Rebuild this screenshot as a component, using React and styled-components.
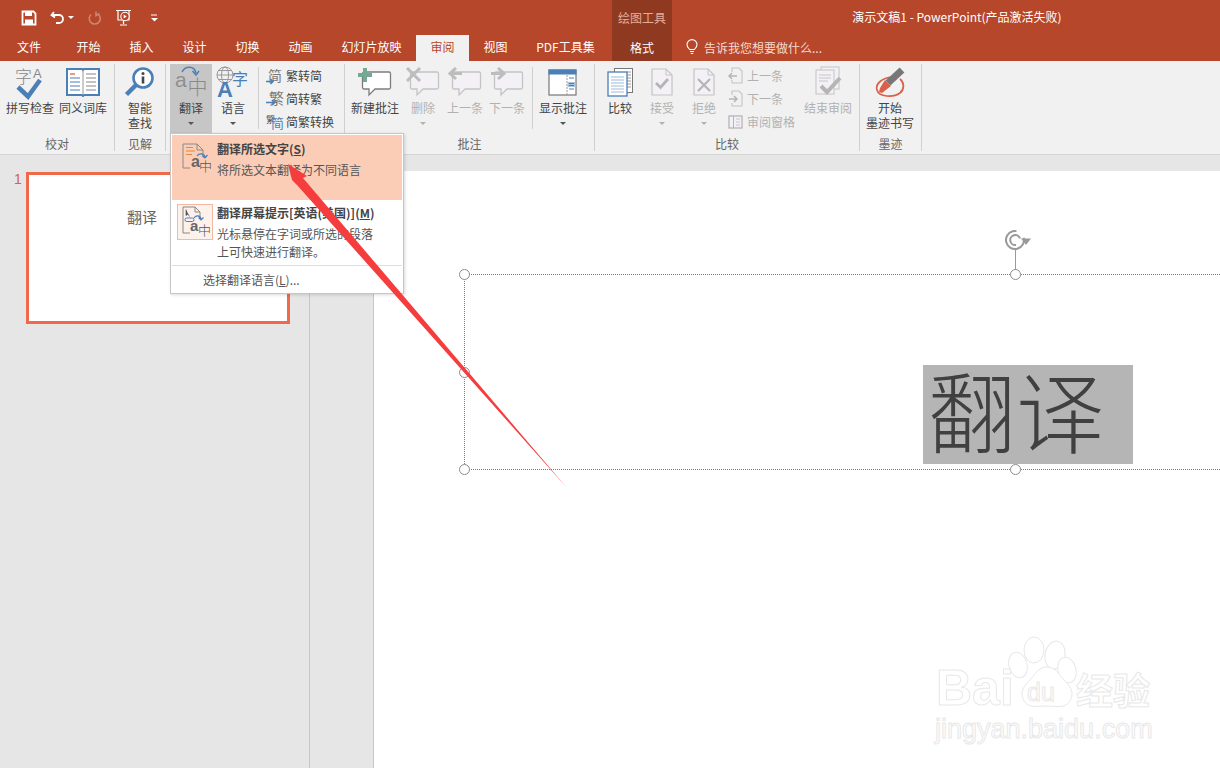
import React from 'react';
import styled, { createGlobalStyle } from 'styled-components';

const GlobalStyle = createGlobalStyle`
  html, body { margin: 0; padding: 0; height: 100%; background: #e6e6e6; }
  body {
    font-family: "Noto Sans CJK SC", "Liberation Sans", sans-serif;
    font-size: 12px;
    color: #444;
    overflow: hidden;
  }
  #root { height: 100%; }
`;

const Page = styled.div`
  position: relative;
  width: 1220px;
  height: 768px;
  overflow: hidden;
  display: flex;
  flex-direction: column;
`;

// Title bar + tabs
const Header = styled.header`
  background: #b7472a;
  color: #fff;
  flex: none;
`;

const TitleRow = styled.div`
  display: flex;
  height: 35px;
`;

const Qat = styled.div`
  width: 612px;
  display: flex;
  align-items: center;
  padding-left: 21px;
  box-sizing: border-box;
`;

const QatSlot = styled.span`
  display: flex;
  align-items: center;
  margin-right: ${p => p.$gap || 0}px;
`;

const QatCaret = styled.i`
  display: block;
  margin-left: 3px;
  width: 0;
  height: 0;
  border-left: 3px solid transparent;
  border-right: 3px solid transparent;
  border-top: 3px solid #fff;
`;

const ContextCell = styled.div`
  width: 60px;
  box-sizing: border-box;
  background: #8f3a20;
  display: flex;
  align-items: center;
  justify-content: center;
  padding-bottom: ${p => p.$pb || 0}px;
  color: ${p => p.$dim ? '#e6ad98' : '#fff'};
`;

const DocTitle = styled.div`
  flex: 1;
  text-align: center;
  padding-left: 22px;
  line-height: 33px;
`;

const TabRow = styled.div`
  display: flex;
  height: 26px;
`;

const Tab = styled.div`
  width: ${p => p.$w}px;
  box-sizing: border-box;
  padding-right: ${p => p.$shift || 0}px;
  text-align: center;
  line-height: 24px;
  background: ${p => p.$active ? '#f1f1f1' : 'transparent'};
  color: ${p => p.$active ? '#b7472a' : '#fff'};
`;

const TellMe = styled.div`
  display: flex;
  align-items: center;
  gap: 6px;
  padding: 0 0 2px 14px;
  color: #f3dcd3;
`;

// Ribbon
const Ribbon = styled.div`
  flex: none;
  display: flex;
  height: 94px;
  box-sizing: border-box;
  padding-top: 3px;
  background: #f1f1f1;
  border-bottom: 1px solid #d4d4d4;
`;

const Group = styled.section`
  width: ${p => p.$w}px;
  height: 87px;
  box-sizing: border-box;
  border-right: 1px solid #d0d0d0;
  display: flex;
  flex-direction: column;
`;

const GroupItems = styled.div`
  flex: none;
  height: 72px;
  display: flex;
  padding-left: ${p => p.$pad || 0}px;
`;

const GroupLabel = styled.div`
  text-align: center;
  line-height: 16px;
  color: #666;
`;

const BigButton = styled.div`
  width: ${p => p.$w}px;
  height: 70px;
  flex: none;
  display: flex;
  flex-direction: column;
  align-items: center;
  background: ${p => p.$on ? '#c6c6c6' : 'transparent'};
  color: ${p => p.$off ? '#b1b1b1' : '#444'};
`;

const BigIcon = styled.div`
  height: 36px;
  flex: none;
  display: flex;
  align-items: center;
  justify-content: center;
`;

const BigLabel = styled.div`
  line-height: 15px;
  text-align: center;
  white-space: nowrap;
`;

const Caret = styled.i`
  display: block;
  margin-top: 7px;
  width: 0;
  height: 0;
  border-left: 3px solid transparent;
  border-right: 3px solid transparent;
  border-top: 3px solid ${p => p.$off ? '#b1b1b1' : '#555'};
`;

const InnerSep = styled.div`
  width: 1px;
  height: 62px;
  margin: 3px ${p => p.$after}px 0 ${p => p.$before}px;
  background: #d0d0d0;
  flex: none;
`;

const SmallList = styled.div`
  flex: none;
  width: ${p => p.$w}px;
  padding-left: 4px;
  box-sizing: border-box;
  display: flex;
  flex-direction: column;
`;

const SmallRow = styled.div`
  height: 23px;
  display: flex;
  align-items: center;
  gap: ${p => p.$off ? 4 : 2}px;
  white-space: nowrap;
  color: ${p => p.$off ? '#b1b1b1' : '#444'};
`;

// Workspace
const Workspace = styled.main`
  flex: 1;
  display: flex;
  min-height: 0;
`;

const Sidebar = styled.aside`
  width: 310px;
  flex: none;
  box-sizing: border-box;
  background: #e6e6e6;
  border-right: 1px solid #c6c6c6;
  display: flex;
  align-items: flex-start;
  padding: 17px 0 0 14px;
`;

const SlideNo = styled.div`
  width: 12px;
  font-family: "Liberation Sans", sans-serif;
  font-size: 14px;
  line-height: 14px;
  color: #d9634a;
`;

const Thumb = styled.div`
  width: 264px;
  height: 152px;
  box-sizing: border-box;
  background: #fff;
  border: 3px solid #ee6a4b;
  display: flex;
  justify-content: center;
  padding: 31px 32px 0 0;
  font-size: 15px;
  line-height: 22px;
  color: #666;
`;

const Stage = styled.div`
  flex: 1;
  display: flex;
  padding: 16px 0 0 63px;
  background: #e6e6e6;
`;

const GutterLine = styled.div`
  width: 1px;
  background: #c6c6c6;
  flex: none;
`;

const Slide = styled.div`
  flex: 1;
  background: #fff;
  position: relative;
`;

const Frame = styled.div`
  position: absolute;
  left: 90px;
  top: 103px;
  right: -4px;
  height: 194px;
  border: 1px dotted #7a7a7a;
  border-right: none;
`;

const Handle = styled.i`
  position: absolute;
  left: ${p => p.$x}px;
  top: ${p => p.$y}px;
  width: 11px;
  height: 11px;
  border-radius: 50%;
  box-sizing: border-box;
  background: #fff;
  border: 1.5px solid #8c8c8c;
`;

const StemLine = styled.i`
  position: absolute;
  left: 641px;
  top: 79px;
  width: 1px;
  height: 20px;
  background: #999;
`;

const Rotate = styled.div`
  position: absolute;
  left: 631px;
  top: 58px;
  width: 27px;
  height: 22px;
`;

const BigText = styled.div`
  position: absolute;
  left: 549px;
  top: 194px;
  width: 210px;
  height: 99px;
  background: #b5b5b5;
  color: #404040;
  font-size: 88px;
  font-weight: 300;
  line-height: 86px;
  padding-left: 5px;
  box-sizing: border-box;
  white-space: nowrap;
  overflow: hidden;
`;

const Menu = styled.div`
  position: absolute;
  left: 170px;
  top: 133px;
  width: 234px;
  height: 161px;
  box-sizing: border-box;
  background: #fff;
  border: 1px solid #c6c6c6;
  box-shadow: 1px 1px 3px rgba(0, 0, 0, 0.15);
  display: flex;
  flex-direction: column;
`;

const MenuItem = styled.div`
  height: 65px;
  margin: ${p => p.$hot ? '1px 1px 0' : '0 1px'};
  flex: none;
  display: flex;
  gap: ${p => p.$hot ? 5 : 4}px;
  padding: ${p => p.$hot ? '5px 0 0 6px' : '4px 0 0 5px'};
  box-sizing: border-box;
  background: ${p => p.$hot ? '#fccdb6' : 'transparent'};
`;

const MenuIconBox = styled.div`
  width: ${p => p.$w}px;
  height: 36px;
  flex: none;
  box-sizing: border-box;
  display: flex;
  align-items: center;
  justify-content: flex-end;
  background: ${p => p.$boxed ? '#fdf1ec' : 'transparent'};
  border: ${p => p.$boxed ? '1px solid #f6b99f' : 'none'};
`;

const MenuText = styled.div`
  display: flex;
  flex-direction: column;
`;

const MenuTitle = styled.div`
  font-weight: 700;
  line-height: 18px;
  white-space: nowrap;
  color: #444;
`;

const MenuDesc = styled.div`
  margin-top: 3px;
  line-height: 18px;
  color: #555;
`;

const MenuDivider = styled.div`
  height: 1px;
  margin: 0 1px;
  background: #dedede;
  flex: none;
`;

const MenuFoot = styled.div`
  padding-left: 32px;
  line-height: 28px;
  color: #555;
`;

const Key = styled.span`
  text-decoration: underline;
`;

const Overlay = styled.svg`
  position: absolute;
  left: 0;
  top: 0;
  pointer-events: none;
`;

const BLUE = '#4a7fb8';
const OFF = '#c4c4c4';
const CJK = '"Noto Sans CJK SC", sans-serif';
const LAT = '"Liberation Sans", sans-serif';

// Icons
const SaveIcon = () => (
  <svg width="16" height="16" viewBox="0 0 16 16">
    <path d="M1.5 1.5h11l2 2v11h-13z" fill="none" stroke="#fff" strokeWidth="1.8" />
    <rect x="4" y="1.5" width="7" height="4.5" fill="#fff" />
    <rect x="4" y="9.5" width="8" height="5" fill="#fff" />
  </svg>
);

const UndoIcon = () => (
  <svg width="15" height="15" viewBox="0 0 15 15">
    <path d="M4 2 1.500 5 5 7.500M2 5h7a4 4 0 0 1 0 8H6" fill="none" stroke="#fff" strokeWidth="1.8" />
  </svg>
);

const RedoIcon = () => (
  <svg width="15" height="16" viewBox="0 0 15 16">
    <path d="M9 1.500v4l3.500-2M11.500 4.500a5.500 5.500 0 1 1-7.500 0" fill="none" stroke="#cd8570" strokeWidth="1.6" />
  </svg>
);

const ShowIcon = () => (
  <svg width="18" height="18" viewBox="0 0 18 18">
    <path d="M1 1.500h15M3 2v9h11V2M8.500 11v4M5 16h7" fill="none" stroke="#fff" strokeWidth="1.2" />
    <circle cx="10" cy="7.500" r="4.200" fill="#b7472a" stroke="#fff" strokeWidth="1.1" />
    <path d="M8.700 5.500v4l3-2z" fill="#fff" />
  </svg>
);

const QatMore = () => (
  <svg width="7" height="8" viewBox="0 0 7 8">
    <path d="M0 1h6" stroke="#fff" strokeWidth="1" />
    <path d="M0 4h7L3.500 7.500z" fill="#fff" />
  </svg>
);

const Bulb = () => (
  <svg width="12" height="16" viewBox="0 0 12 16">
    <path d="M3.600 10.500C2.500 9 1 8 1 5.600a5 5 0 0 1 10 0C11 8 9.500 9 8.400 10.500zM4 12.500h4M4.800 14.500h2.400" fill="none" stroke="#fff" strokeWidth="1.100" />
  </svg>
);

const SpellIcon = () => (
  <svg width="30" height="35" viewBox="0 0 30 35">
    <text x="0" y="18" fontFamily={CJK} fontSize="17" fontWeight="300" fill="#888">字</text>
    <text x="18" y="13" fontFamily={LAT} fontSize="13" fill="#888">A</text>
    <path d="M3 22l10 9.500L25 15" fill="none" stroke={BLUE} strokeWidth="4.500" />
  </svg>
);

const BookIcon = () => (
  <svg width="34" height="30" viewBox="0 0 34 30">
    <path d="M1 2h15l1 1 1-1h15v26H18l-1 1-1-1H1z" fill="#fff" stroke={BLUE} strokeWidth="2" />
    <path d="M17 3v25" stroke="#999" strokeWidth="1" />
    <path d="M4 7h5" stroke="#d9604a" strokeWidth="1.300" />
    <path d="M4 11h10M4 15h10M4 19h10M4 23h10" stroke={BLUE} strokeWidth="1.100" />
    <path d="M20 7h10M20 11h10M20 15h10M20 19h10M20 23h10" stroke="#888" strokeWidth="1.100" />
  </svg>
);

const LookupIcon = () => (
  <svg width="32" height="32" viewBox="0 0 32 32">
    <circle cx="19" cy="12" r="9.500" fill="#fff" stroke={BLUE} strokeWidth="2.600" />
    <path d="M12 19 2.500 28.500" stroke={BLUE} strokeWidth="4.500" />
    <circle cx="19" cy="7.500" r="1.500" fill="#444" />
    <path d="M19 10.500v7" stroke="#444" strokeWidth="2.600" />
  </svg>
);

const TranslateGlyph = () => (
  <svg width="32" height="34" viewBox="0 0 32 34">
    <text x="0" y="22" fontFamily={LAT} fontSize="21" fill="#8f8f8f">a</text>
    <text x="12.500" y="29.500" fontFamily={CJK} fontSize="20" fontWeight="300" fill="#8a8a8a">中</text>
    <path d="M7 7C10 1 19 0 21 8" fill="none" stroke={BLUE} strokeWidth="1.500" />
    <path d="M17.500 6l3.500 4 3-4" fill="none" stroke={BLUE} strokeWidth="1.500" />
  </svg>
);

const LanguageIcon = () => (
  <svg width="34" height="34" viewBox="0 0 34 34">
    <circle cx="9" cy="10" r="8" fill="none" stroke="#999" strokeWidth="1" />
    <ellipse cx="9" cy="10" rx="3.500" ry="8" fill="none" stroke="#999" strokeWidth="1" />
    <path d="M1 10h16M2.500 5.500h13M2.500 14.500h13" stroke="#999" strokeWidth="1" />
    <text x="1" y="32" fontFamily={LAT} fontSize="22" fontWeight="700" fill={BLUE}>A</text>
    <text x="16" y="20" fontFamily={CJK} fontSize="16" fill={BLUE}>字</text>
  </svg>
);

const ToSimplified = () => (
  <svg width="18" height="20" viewBox="0 0 18 20">
    <text x="2" y="14.500" fontFamily={CJK} fontSize="14" fill="#777">简</text>
    <path d="M0 15.500h6.500M4.500 13 7 15.500 4.500 18" fill="none" stroke={BLUE} strokeWidth="1.500" />
  </svg>
);

const ToTraditional = () => (
  <svg width="18" height="20" viewBox="0 0 18 20">
    <text x="3" y="15" fontFamily={CJK} fontSize="15" fill="#777">繁</text>
    <path d="M0 13.500h8M6 11l2.500 2.500L6 16" fill="none" stroke={BLUE} strokeWidth="1.500" />
  </svg>
);

const SwapScript = () => (
  <svg width="18" height="20" viewBox="0 0 18 20">
    <text x="0" y="11" fontFamily={CJK} fontSize="9" fill="#555">繁</text>
    <text x="5" y="16" fontFamily={CJK} fontSize="13" fill={BLUE}>简</text>
  </svg>
);

const Bubble = ({ stroke, children }) => (
  <svg width="34" height="30" viewBox="0 0 34 30">
    <path d="M6 5h25a1.500 1.500 0 0 1 1.500 1.500v14a1.500 1.500 0 0 1-1.500 1.500H17l-6 6v-6H6a1.500 1.500 0 0 1-1.500-1.500v-14A1.500 1.500 0 0 1 6 5z" fill={stroke === OFF ? '#f4f1f6' : '#fff'} stroke={stroke} strokeWidth="1.300" />
    {children}
  </svg>
);

const NewComment = () => (
  <Bubble stroke="#7d7d7d">
    <path d="M0 8h14M7 1v14" stroke="#74a994" strokeWidth="4" />
  </Bubble>
);

const DeleteComment = () => (
  <Bubble stroke={OFF}>
    <path d="M1 1l13 13M14 1 1 14" stroke="#bdbdbd" strokeWidth="3" />
  </Bubble>
);

const PrevComment = () => (
  <Bubble stroke={OFF}>
    <path d="M8 1 2 6.500 8 12M2 6.500h12" fill="none" stroke="#bdbdbd" strokeWidth="3" />
  </Bubble>
);

const NextComment = () => (
  <Bubble stroke={OFF}>
    <path d="M8 1l6 5.500L8 12M14 6.500H1" fill="none" stroke="#bdbdbd" strokeWidth="3" />
  </Bubble>
);

const ShowComments = () => (
  <svg width="30" height="27" viewBox="0 0 30 27">
    <rect x="1" y="1" width="27" height="25" fill="#fff" stroke="#777" strokeWidth="1.200" />
    <rect x="0.500" y="0.500" width="28" height="5" fill={BLUE} />
    <path d="M19 6v20" stroke="#999" strokeWidth="1" strokeDasharray="2 1" />
    <path d="M21 9h5M21 20h5" stroke={BLUE} strokeWidth="1.200" />
    <rect x="19.500" y="13" width="8" height="5" fill="#a9c2dd" />
    <path d="M21 14.500h5M21 16.500h5" stroke={BLUE} strokeWidth="1" />
  </svg>
);

const CompareIcon = () => (
  <svg width="26" height="29" viewBox="0 0 26 29">
    <rect x="7.500" y="0.500" width="18" height="24" fill="#fff" stroke="#777" />
    <path d="M20 4h4M20 7h4M20 10h4M20 13h4M20 16h4M20 19h4" stroke="#999" />
    <rect x="1" y="4" width="19" height="24" fill="#fff" stroke={BLUE} strokeWidth="1.300" />
    <path d="M4 9h13M4 12h13M4 15h13M4 18h13M4 21h13M4 24h13" stroke="#9bbbdb" />
  </svg>
);

const PageOff = ({ children }) => (
  <svg width="22" height="28" viewBox="0 0 22 28">
    <path d="M1 1h14l6 6v20H1z" fill="#f4f1f6" stroke={OFF} strokeWidth="1.200" />
    <path d="M15 1v6h6" fill="none" stroke={OFF} />
    {children}
  </svg>
);

const AcceptIcon = () => (
  <PageOff><path d="M5 15l4.500 4.500L17 11" fill="none" stroke="#b5b5b5" strokeWidth="2.800" /></PageOff>
);

const RejectIcon = () => (
  <PageOff><path d="M5 11l12 12M17 11 5 23" stroke="#b5b5b5" strokeWidth="2.200" /></PageOff>
);

const MiniPage = ({ prev }) => (
  <svg width="15" height="17" viewBox="0 0 15 17">
    <path d="M4 5V1h7l3 3v12H4v-3" fill="none" stroke={OFF} strokeWidth="1.100" />
    {prev
      ? <path d="M9 9H1M4 6 1 9l3 3" fill="none" stroke="#b5b5b5" strokeWidth="1.500" />
      : <path d="M1 9h8M6 6l3 3-3 3" fill="none" stroke="#b5b5b5" strokeWidth="1.500" />}
  </svg>
);

const PaneIcon = () => (
  <svg width="15" height="14" viewBox="0 0 15 14">
    <rect x="1" y="1" width="13" height="12" fill="#f4f1f6" stroke="#b5b5b5" strokeWidth="1.300" />
    <path d="M5.500 1v12" stroke="#b5b5b5" />
    <path d="M8 4h4M8 7h4M8 10h4" stroke="#c4c4c4" />
  </svg>
);

const EndReview = () => (
  <svg width="28" height="32" viewBox="0 0 28 32">
    <rect x="7" y="1" width="18" height="22" fill="#f4f1f6" stroke={OFF} />
    <rect x="2" y="4" width="18" height="24" fill="#f4f1f6" stroke={OFF} />
    <path d="M5 9h12M5 12h12M5 15h9" stroke={OFF} />
    <path d="M7 20l6 6L26 12" fill="none" stroke="#b5b5b5" strokeWidth="4" />
  </svg>
);

const InkIcon = () => (
  <svg width="30" height="32" viewBox="0 0 30 32">
    <path d="M17 11C8 12 0 17 2 24c2 7 16 8 23 3 5-4 4-11 0-14" fill="none" stroke="#d9604a" strokeWidth="1.700" />
    <path d="M27 4 13 17" stroke="#777" strokeWidth="7" />
    <path d="M10 14l6 6-9 7-3-1 1-4z" fill="#d9604a" />
  </svg>
);

const TranslateDocIcon = () => (
  <svg width="30" height="30" viewBox="0 0 30 30">
    <path d="M8 25H1V1h14l6 6v5" fill="none" stroke="#888" strokeWidth="1" />
    <path d="M15 1v6h6" fill="none" stroke="#888" />
    <path d="M4 4.500h7M4 8h9M4 11.500h6" stroke="#e08a3c" strokeWidth="1.200" />
    <path d="M15 13c2-3 7-3 8 1M20 12.500l3 2.500 2.500-3" fill="none" stroke={BLUE} strokeWidth="1.200" />
    <text x="9" y="24" fontFamily={LAT} fontSize="16" fontWeight="700" fill="#666">a</text>
    <text x="17" y="28" fontFamily={CJK} fontSize="13" fontWeight="300" fill="#555">中</text>
  </svg>
);

const TranslateTipIcon = () => (
  <svg width="31" height="32" viewBox="0 0 31 32">
    <path d="M9 27H2V1h12l5 5v6" fill="none" stroke="#888" strokeWidth="1" />
    <path d="M14 1v5h5" fill="none" stroke="#888" />
    <path d="M5 3.500v6l2-1.500 1.500 2.500" fill="#555" stroke="#555" strokeWidth="0.700" />
    <rect x="4" y="12" width="9" height="3.500" rx="1.700" fill="none" stroke={BLUE} />
    <path d="M13 12c2-3 6-3 7 1M17.500 11.500l2.500 2.500 2.500-2.500" fill="none" stroke={BLUE} strokeWidth="1.200" />
    <text x="9" y="25" fontFamily={LAT} fontSize="15" fontWeight="700" fill="#666">a</text>
    <text x="17" y="29" fontFamily={CJK} fontSize="13" fontWeight="300" fill="#555">中</text>
  </svg>
);

const RotateIcon = () => (
  <svg width="27" height="22" viewBox="0 0 27 22">
    <circle cx="10" cy="11" r="9" fill="none" stroke="#999" strokeWidth="2" strokeDasharray="46 11" transform="rotate(-15 10 11)" />
    <path d="M15 9.500A5 5 0 1 0 11 16" fill="none" stroke="#999" strokeWidth="2" />
    <path d="M16 9.500h10L21 16z" fill="#999" />
  </svg>
);

const Big = ({ w, icon, lines, caret, on, off }) => (
  <BigButton $w={w} $on={on} $off={off}>
    <BigIcon>{icon}</BigIcon>
    {lines.map(line => <BigLabel key={line}>{line}</BigLabel>)}
    {caret && <Caret $off={off} />}
  </BigButton>
);

const tabs = [
  { name: '文件', w: 62, shift: 4 },
  { name: '开始', w: 53 },
  { name: '插入', w: 53 },
  { name: '设计', w: 53 },
  { name: '切换', w: 53 },
  { name: '动画', w: 53 },
  { name: '幻灯片放映', w: 89 },
  { name: '审阅', w: 53, active: true },
  { name: '视图', w: 53 },
  { name: 'PDF工具集', w: 90, shift: 3 },
];

const Watermark = () => (
  <Overlay width="1220" height="768" viewBox="0 0 1220 768">
    <g fill="#fff" stroke="#e8e8e8" strokeWidth="1">
      <ellipse cx="1034" cy="650" rx="10" ry="13" />
      <ellipse cx="1055" cy="655" rx="10" ry="14" transform="rotate(10 1055 655)" />
      <ellipse cx="1067" cy="670" rx="9" ry="13" transform="rotate(-15 1067 670)" />
      <ellipse cx="1018" cy="665" rx="9" ry="13" transform="rotate(-15 1018 665)" />
      <path d="M1047 667c9 0 13 9 18 14 7 7 9 13 5 20-5 8-14 5-23 5s-18 3-23-5c-4-7-2-13 5-20 5-5 9-14 18-14z" />
      <text x="936" y="705" fontFamily={LAT} fontSize="50" fontWeight="700">Bai</text>
      <text x="1076" y="705" fontFamily={CJK} fontSize="37" fontWeight="700">经验</text>
      <text x="935" y="738" fontFamily={LAT} fontSize="27">jingyan.baidu.com</text>
      <text x="1027" y="701" fontFamily={LAT} fontSize="25">du</text>
    </g>
  </Overlay>
);

const RedArrow = () => (
  <Overlay width="1220" height="768" viewBox="0 0 1220 768">
    <polygon
      points="288,164 307,176 303,178 567,488 297,185 292,180"
      fill="#f53d3d"
    />
  </Overlay>
);

const App = () => (
  <Page>
    <GlobalStyle />
    <Header>
      <TitleRow>
        <Qat>
          <QatSlot $gap={13}><SaveIcon /></QatSlot>
          <QatSlot $gap={13}><UndoIcon /><QatCaret /></QatSlot>
          <QatSlot $gap={13}><RedoIcon /></QatSlot>
          <QatSlot $gap={18}><ShowIcon /></QatSlot>
          <QatSlot><QatMore /></QatSlot>
        </Qat>
        <ContextCell $dim>绘图工具</ContextCell>
        <DocTitle>演示文稿1 - PowerPoint(产品激活失败)</DocTitle>
      </TitleRow>
      <TabRow>
        {tabs.map(tab => (
          <Tab key={tab.name} $w={tab.w} $shift={tab.shift} $active={tab.active}>{tab.name}</Tab>
        ))}
        <ContextCell $pb={2}>格式</ContextCell>
        <TellMe><Bulb />告诉我您想要做什么...</TellMe>
      </TabRow>
    </Header>

    <Ribbon>
      <Group $w={115}>
        <GroupItems $pad={4}>
          <Big w={52} icon={<SpellIcon />} lines={['拼写检查']} />
          <Big w={54} icon={<BookIcon />} lines={['同义词库']} />
        </GroupItems>
        <GroupLabel>校对</GroupLabel>
      </Group>
      <Group $w={51}>
        <GroupItems>
          <Big w={50} icon={<LookupIcon />} lines={['智能', '查找']} />
        </GroupItems>
        <GroupLabel>见解</GroupLabel>
      </Group>
      <Group $w={179}>
        <GroupItems $pad={4}>
          <Big w={42} on icon={<TranslateGlyph />} lines={['翻译']} caret />
          <Big w={42} icon={<LanguageIcon />} lines={['语言']} caret />
          <InnerSep $before={4} $after={3} />
          <SmallList $w={76}>
            <SmallRow><ToSimplified />繁转简</SmallRow>
            <SmallRow><ToTraditional />简转繁</SmallRow>
            <SmallRow><SwapScript />简繁转换</SmallRow>
          </SmallList>
        </GroupItems>
        <GroupLabel />
      </Group>
      <Group $w={250}>
        <GroupItems $pad={4}>
          <Big w={52} icon={<NewComment />} lines={['新建批注']} />
          <Big w={44} off icon={<DeleteComment />} lines={['删除']} caret />
          <Big w={40} off icon={<PrevComment />} lines={['上一条']} />
          <Big w={44} off icon={<NextComment />} lines={['下一条']} />
          <InnerSep $before={3} $after={4} />
          <Big w={52} icon={<ShowComments />} lines={['显示批注']} caret />
        </GroupItems>
        <GroupLabel>批注</GroupLabel>
      </Group>
      <Group $w={265}>
        <GroupItems $pad={5}>
          <Big w={40} icon={<CompareIcon />} lines={['比较']} />
          <Big w={44} off icon={<AcceptIcon />} lines={['接受']} caret />
          <Big w={40} off icon={<RejectIcon />} lines={['拒绝']} caret />
          <SmallList $w={76}>
            <SmallRow $off><MiniPage prev />上一条</SmallRow>
            <SmallRow $off><MiniPage />下一条</SmallRow>
            <SmallRow $off><PaneIcon />审阅窗格</SmallRow>
          </SmallList>
          <Big w={56} off icon={<EndReview />} lines={['结束审阅']} />
        </GroupItems>
        <GroupLabel>比较</GroupLabel>
      </Group>
      <Group $w={62}>
        <GroupItems>
          <Big w={60} icon={<InkIcon />} lines={['开始', '墨迹书写']} />
        </GroupItems>
        <GroupLabel>墨迹</GroupLabel>
      </Group>
    </Ribbon>

    <Workspace>
      <Sidebar>
        <SlideNo>1</SlideNo>
        <Thumb>翻译</Thumb>
      </Sidebar>
      <Stage>
        <GutterLine />
        <Slide>
          <Rotate><RotateIcon /></Rotate>
          <StemLine />
          <Frame />
          <BigText>翻译</BigText>
          <Handle $x={85} $y={98} />
          <Handle $x={636} $y={98} />
          <Handle $x={85} $y={196} />
          <Handle $x={85} $y={293} />
          <Handle $x={636} $y={293} />
        </Slide>
      </Stage>
    </Workspace>

    <Watermark />

    <Menu>
      <MenuItem $hot>
        <MenuIconBox $w={34}><TranslateDocIcon /></MenuIconBox>
        <MenuText>
          <MenuTitle>翻译所选文字(<Key>S</Key>)</MenuTitle>
          <MenuDesc>将所选文本翻译为不同语言</MenuDesc>
        </MenuText>
      </MenuItem>
      <MenuItem>
        <MenuIconBox $w={36} $boxed><TranslateTipIcon /></MenuIconBox>
        <MenuText>
          <MenuTitle>翻译屏幕提示[英语(美国)](<Key>M</Key>)</MenuTitle>
          <MenuDesc>光标悬停在字词或所选的段落<br />上可快速进行翻译。</MenuDesc>
        </MenuText>
      </MenuItem>
      <MenuDivider />
      <MenuFoot>选择翻译语言(<Key>L</Key>)...</MenuFoot>
    </Menu>

    <RedArrow />
  </Page>
);

export default App;
